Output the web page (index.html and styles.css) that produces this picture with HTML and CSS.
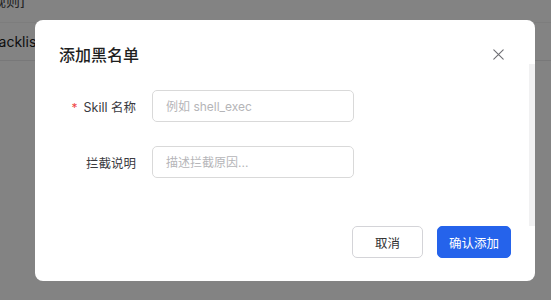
FILE: index.html
```html
<!DOCTYPE html>
<html lang="zh-CN">
<head>
    <meta charset="UTF-8">
    <meta name="viewport" content="width=device-width, initial-scale=1.0">
    <title>添加黑名单</title>
    <link rel="stylesheet" href="styles.css">
</head>
<body>
    <div class="page">
        <div class="table-head">规则]</div>
        <div class="table-row">Blacklist</div>
        <div class="table-row empty"></div>
    </div>

    <div class="mask">
        <div class="modal">
            <div class="modal-header">
                <h2 class="modal-title">添加黑名单</h2>
                <button class="modal-close" aria-label="关闭">
                    <svg width="11" height="11" viewBox="0 0 11 11">
                        <path d="M0.8 0.8 L10.2 10.2 M10.2 0.8 L0.8 10.2" stroke="#6e6e73" stroke-width="1.1" stroke-linecap="round"/>
                    </svg>
                </button>
            </div>

            <div class="modal-body">
                <div class="form-row">
                    <label class="form-label"><span class="required">*</span>Skill 名称</label>
                    <input type="text" class="form-input" placeholder="例如 shell_exec">
                </div>
                <div class="form-row">
                    <label class="form-label">拦截说明</label>
                    <input type="text" class="form-input" placeholder="描述拦截原因...">
                </div>
            </div>

            <div class="modal-footer">
                <button class="btn">取消</button>
                <button class="btn btn-primary">确认添加</button>
            </div>

            <div class="scroll-track"></div>
        </div>
    </div>
</body>
</html>
```

FILE: styles.css
```css
body {
    margin: 0;
    font-family: 'Inter', 'Noto Sans CJK SC', sans-serif;
    background-color: #f7f7f8;
    color: #1f1f1f;
    overflow: hidden;
}

.page {
    margin-top: -14px;
}

.table-head {
    height: 36px;
    line-height: 30px;
    font-size: 14px;
    color: #444;
    border-bottom: 1px solid #ececec;
    text-indent: -8px;
}

.table-row {
    height: 37px;
    line-height: 37px;
    font-size: 14px;
    color: #1a1a1a;
    text-indent: -14px;
    border-bottom: 1px solid #e2e2e4;
}

.table-row.empty {
    height: 200px;
    border-bottom: none;
}

.mask {
    position: fixed;
    inset: 0;
    background-color: rgba(0, 0, 0, 0.47);
}

.modal {
    position: absolute;
    top: 20px;
    left: 35px;
    width: 500px;
    height: 261px;
    box-sizing: border-box;
    background-color: #fff;
    border-radius: 8px;
    padding: 0 24px;
    display: flex;
    flex-direction: column;
    overflow: hidden;
}

.modal-header {
    display: flex;
    align-items: center;
    justify-content: space-between;
    height: 24px;
    margin-top: 22px;
}

.modal-title {
    margin: 0;
    font-size: 16px;
    font-weight: 500;
    color: #1f1f1f;
}

.modal-close {
    width: 20px;
    height: 20px;
    padding: 0;
    margin-right: 3px;
    border: none;
    background: none;
    display: flex;
    align-items: center;
    justify-content: center;
    cursor: pointer;
}

.modal-body {
    display: flex;
    flex-direction: column;
    gap: 24px;
    margin-top: 24px;
}

.form-row {
    display: flex;
    align-items: center;
    gap: 16px;
}

.form-label {
    width: 77px;
    text-align: right;
    font-size: 12.5px;
    color: #3a3a3f;
}

.required {
    color: #ef4444;
    margin-right: 6px;
    font-size: 12px;
}

.form-input {
    width: 202px;
    height: 32px;
    box-sizing: border-box;
    padding: 0 13px;
    border: 1px solid #d9d9d9;
    border-radius: 5px;
    font-family: inherit;
    font-size: 12px;
    color: #333;
    outline: none;
}

.form-input::placeholder {
    color: #b5b5b8;
}

.modal-footer {
    display: flex;
    justify-content: flex-end;
    gap: 14px;
    margin-top: 48px;
}

.btn {
    height: 32px;
    width: 71px;
    padding: 0;
    border: 1px solid #d4d4d8;
    border-radius: 5px;
    background-color: #fff;
    font-family: inherit;
    font-size: 12.5px;
    color: #333;
    cursor: pointer;
}

.btn-primary {
    width: 74px;
    border-color: #2563eb;
    background-color: #2563eb;
    color: #fff;
}

.scroll-track {
    position: absolute;
    top: 44px;
    right: 0;
    width: 6px;
    height: 162px;
    background-color: #f1f1f2;
}
```
